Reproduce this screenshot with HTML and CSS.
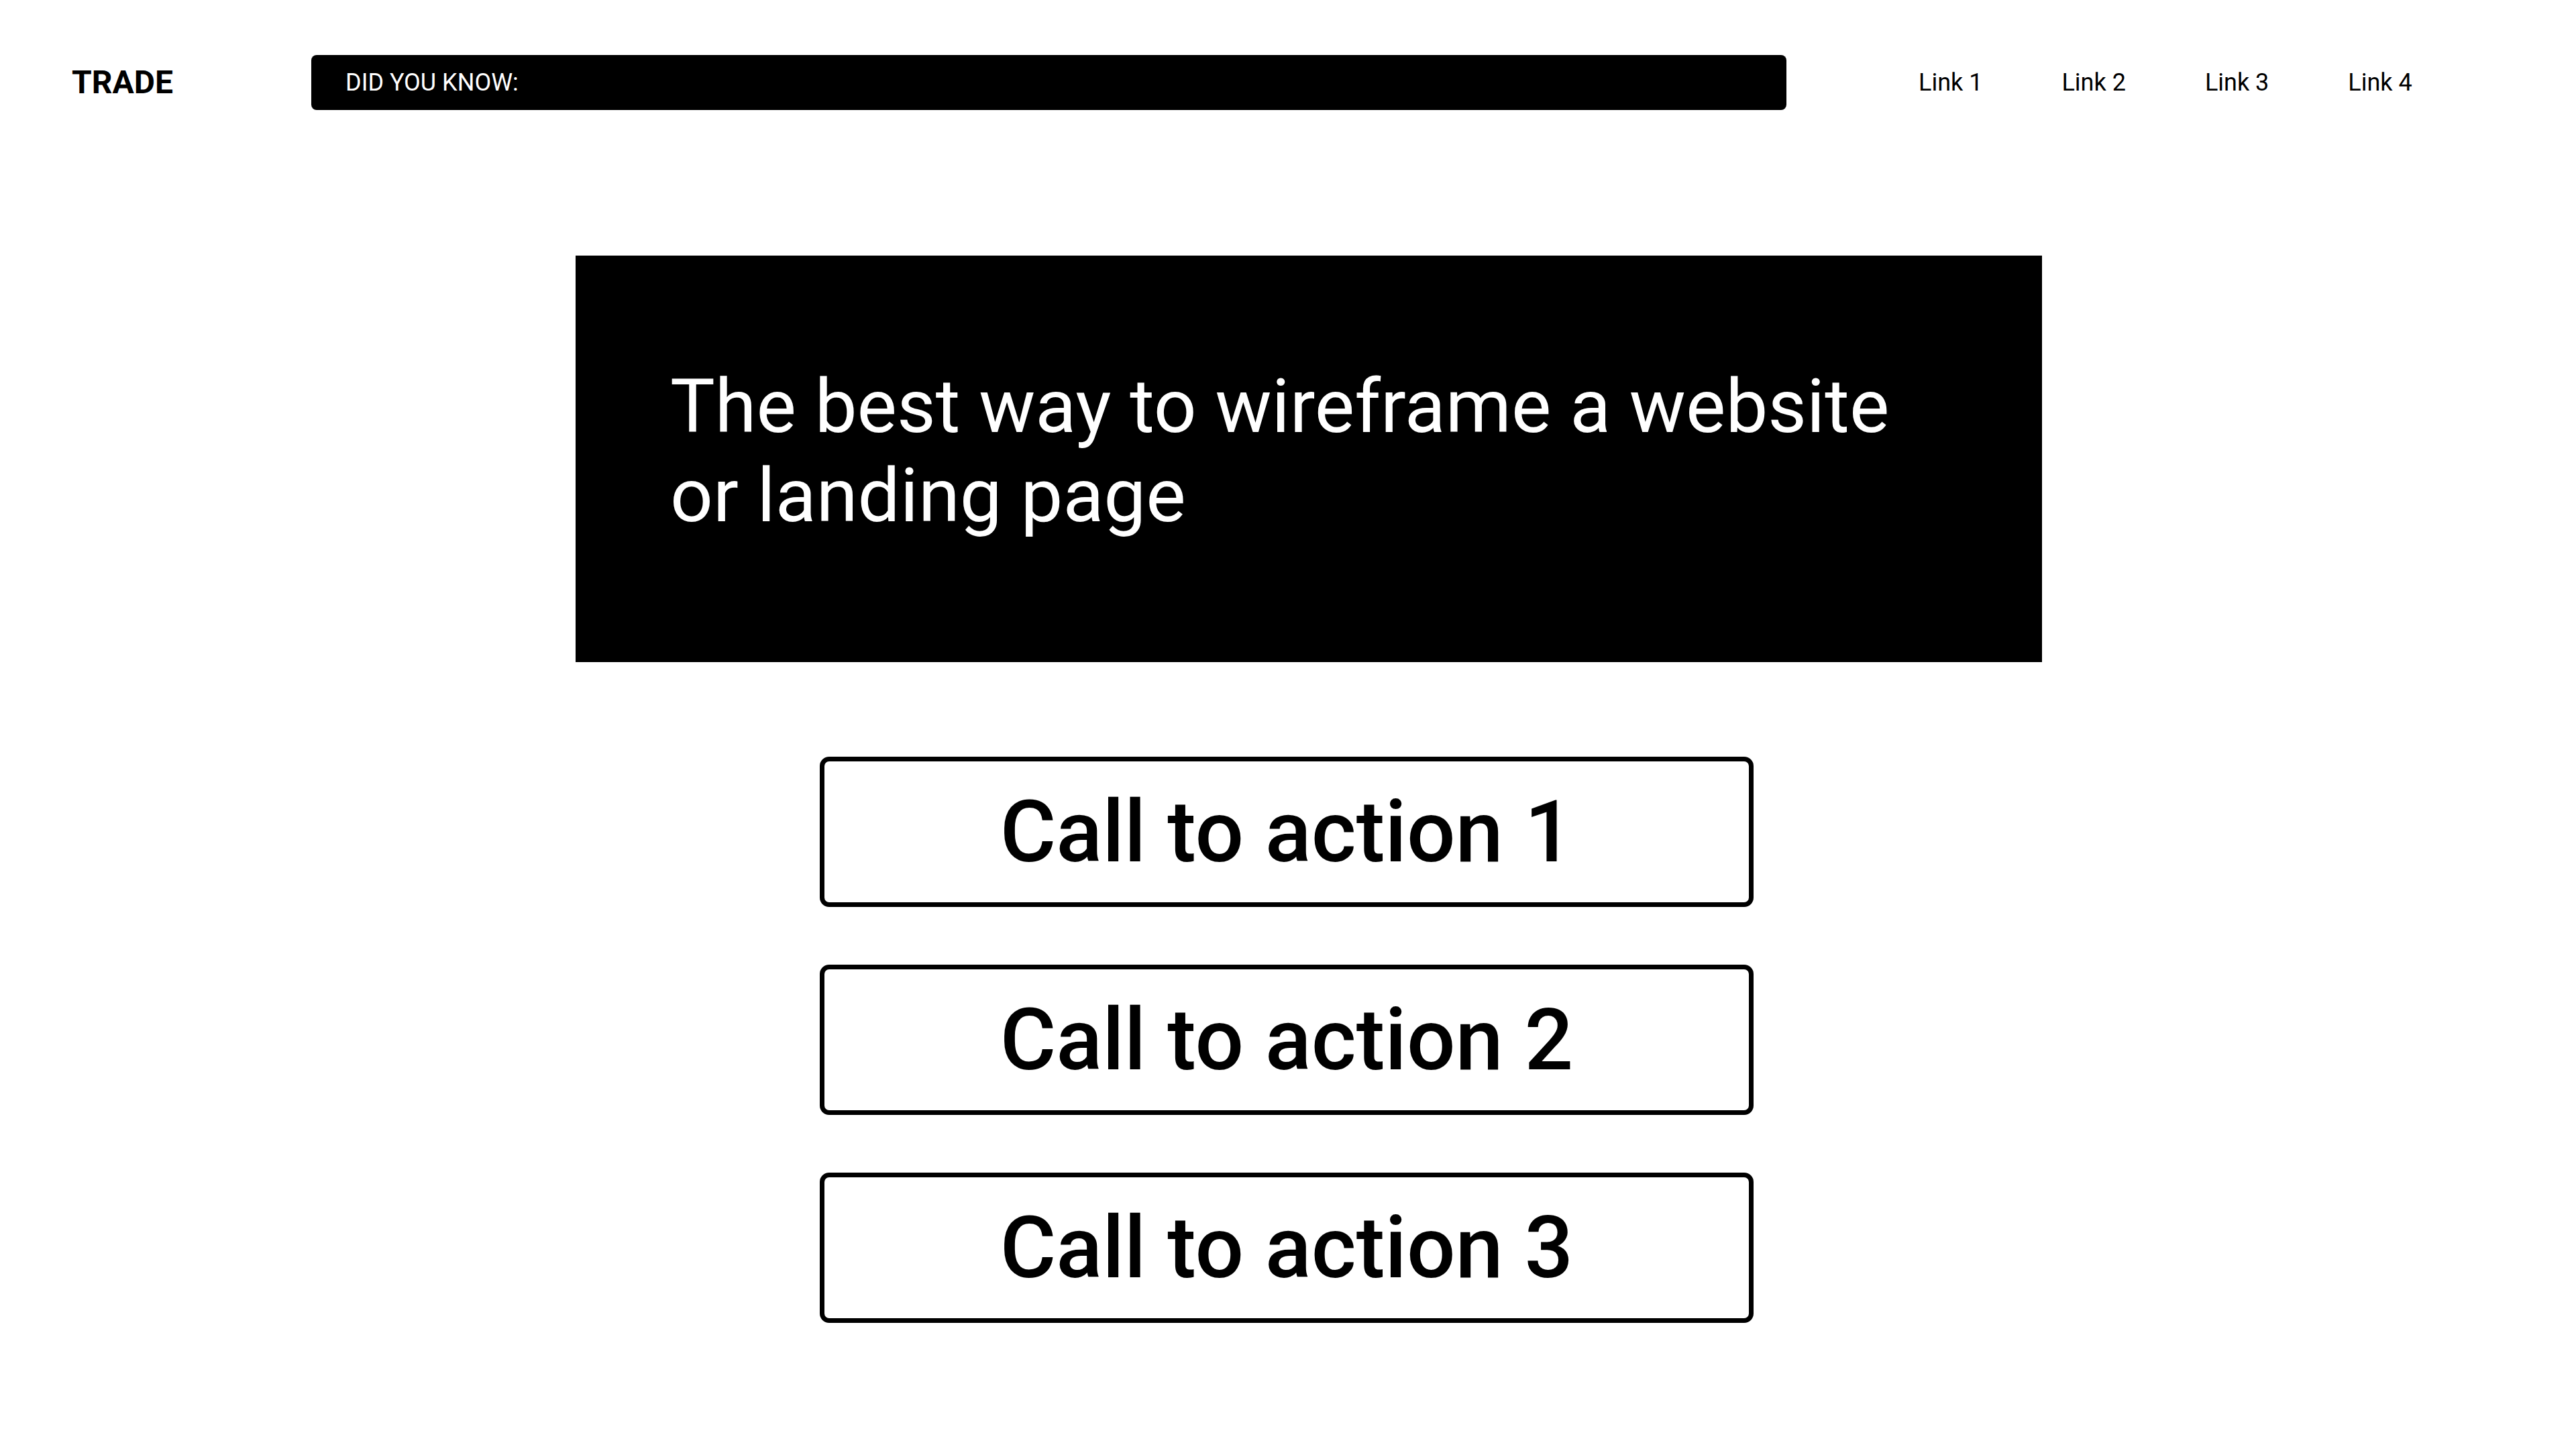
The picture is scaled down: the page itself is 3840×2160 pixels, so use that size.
FILE: index.html
```html
<!DOCTYPE html>
<html lang="en">
<head>
<meta charset="utf-8">
<title>Trade</title>
<link rel="stylesheet" href="styles.css">
</head>
<body>
<header class="top">
  <div class="logo">TRADE</div>
  <div class="ticker">DID YOU KNOW:</div>
  <nav class="nav">
    <a class="nav-link" href="#">Link 1</a>
    <a class="nav-link" href="#">Link 2</a>
    <a class="nav-link" href="#">Link 3</a>
    <a class="nav-link" href="#">Link 4</a>
  </nav>
</header>
<main class="main">
  <section class="hero">
    <h1 class="hero-title">The best way to wireframe a website or landing page</h1>
  </section>
  <div class="actions">
    <a class="cta" href="#">Call to action 1</a>
    <a class="cta" href="#">Call to action 2</a>
    <a class="cta" href="#">Call to action 3</a>
  </div>
</main>
</body>
</html>
```
FILE: styles.css
```css
* { box-sizing: border-box; }
html, body {
  margin: 0;
  padding: 0;
  background: #ffffff;
  color: #000000;
  font-family: Roboto, "Liberation Sans", Arial, sans-serif;
}
body { width: 3840px; height: 2160px; overflow: hidden; }

.top {
  display: flex;
  align-items: center;
  padding: 82px 0 0 107px;
}
.logo {
  width: 357px;
  flex: 0 0 357px;
  font-size: 48px;
  font-weight: 700;
  line-height: 82px;
}
.ticker {
  flex: 0 0 2199px;
  height: 82px;
  background: #000;
  color: #fff;
  border-radius: 8px;
  display: flex;
  align-items: center;
  padding-left: 51px;
  font-size: 36px;
}
.nav {
  display: flex;
  gap: 118px;
  margin-left: 197px;
}
.nav-link {
  color: #000;
  text-decoration: none;
  font-size: 36px;
  line-height: 82px;
}

.main {
  display: flex;
  flex-direction: column;
}
.hero {
  margin: 217px 0 0 858px;
  width: 2186px;
  background: #000;
  color: #fff;
  padding: 158px 141px 182px;
}
.hero-title {
  margin: 0;
  font-size: 112px;
  font-weight: 400;
  line-height: 133px;
}
.actions {
  margin-top: 141px;
  display: flex;
  flex-direction: column;
  align-items: center;
  gap: 86px;
}
.cta {
  width: 1392px;
  height: 224px;
  border: 7px solid #000;
  border-radius: 14px;
  display: flex;
  align-items: center;
  justify-content: center;
  color: #000;
  text-decoration: none;
  font-size: 128px;
  font-weight: 500;
  margin-right: 4px;
}
```
